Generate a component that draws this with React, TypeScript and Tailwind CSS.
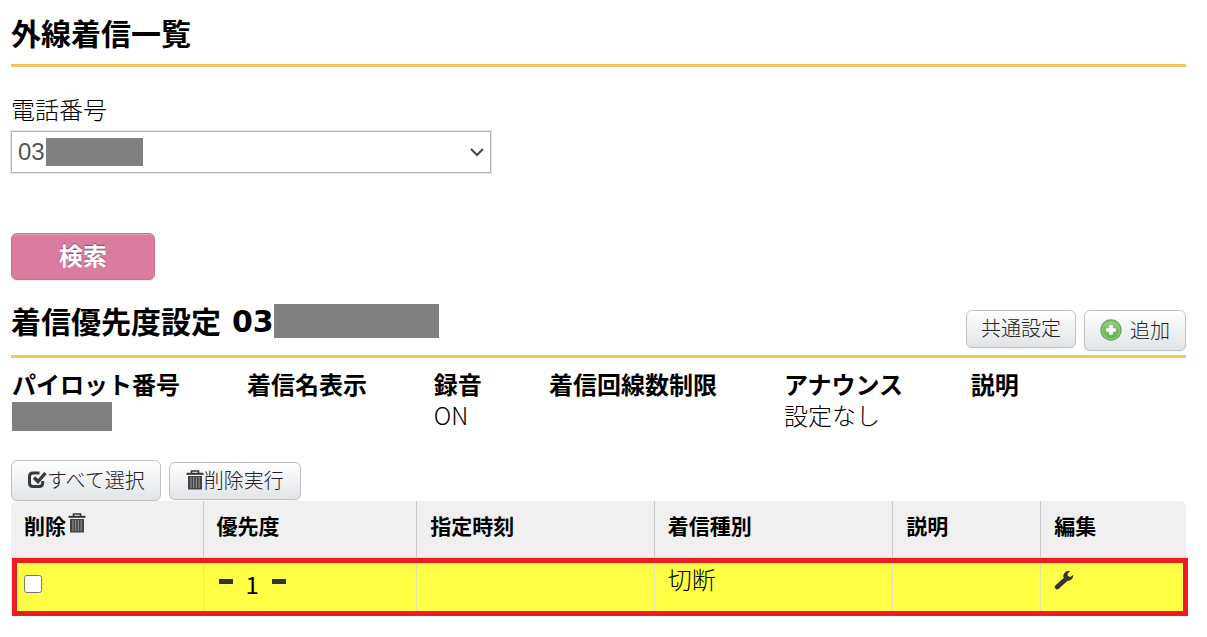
const details = [
    { label: "パイロット番号", width: "w-[20%]", masked: true },
    { label: "着信名表示", width: "w-[15.9%]" },
    { label: "録音", width: "w-[9.8%]", value: "ON" },
    { label: "着信回線数制限", width: "w-[20%]" },
    { label: "アナウンス", width: "w-[15.9%]", value: "設定なし" },
    { label: "説明", width: "w-[18.4%]" },
]

const smallButton = "flex items-center rounded-md border border-[#bfc1c4] bg-linear-to-b from-white to-[#e1e4e7] text-xl leading-7 font-light text-[#222] shadow-xs"

const TrashIcon = () => (
    <svg width="18" height="20" viewBox="0 0 18 20" fill="none" className="shrink-0" aria-hidden="true">
        <path d="M5.5 3V1h7v2" stroke="#333" strokeWidth="1.6" />
        <path d="M0.5 3.8h17" stroke="#333" strokeWidth="2" />
        <path d="M2 6h14v13.5H2z" fill="#444" />
        <path d="M5 7v11M7.7 7v11M10.4 7v11M13.1 7v11" stroke="#999" strokeWidth="1" />
    </svg>
)

const CheckIcon = () => (
    <svg width="20" height="18" viewBox="0 0 20 18" fill="none" className="shrink-0" aria-hidden="true">
        <path d="M12.5 2H6Q2.5 2 2.5 5.5V12Q2.5 15.5 6 15.5H12.2Q15.7 15.5 15.7 12V10" stroke="#3a3a3a" strokeWidth="3" />
        <path d="M7 6.5l4 4L18.5 2" stroke="#3a3a3a" strokeWidth="3.4" />
    </svg>
)

const AddIcon = () => (
    <svg width="22" height="22" viewBox="0 0 22 22" className="shrink-0" aria-hidden="true">
        <defs>
            <linearGradient id="add-green" x1="0" y1="0" x2="0" y2="1">
                <stop offset="0" stopColor="#97c982" />
                <stop offset="1" stopColor="#62b047" />
            </linearGradient>
        </defs>
        <circle cx="11" cy="11" r="10.7" fill="#6aa65c" />
        <circle cx="11" cy="11" r="9.4" fill="#8fc57c" />
        <circle cx="11" cy="11" r="8.2" fill="url(#add-green)" />
        <path d="M11 6.2v9.6M6.2 11h9.6" stroke="#fff" strokeWidth="3.6" />
    </svg>
)

const WrenchIcon = () => (
    <svg width="20" height="20" viewBox="0 0 20 20" fill="none" className="shrink-0" aria-hidden="true">
        <path d="M3.2 17L12.5 8.5" stroke="#333" strokeWidth="4.8" strokeLinecap="round" />
        <path d="M16.2 1.2A5.3 5.3 0 0 0 9.3 6.8L12.6 10.6A5.3 5.3 0 0 0 19.2 5L16.2 6.9L13.8 6.1L13.6 3.5Z" fill="#333" />
    </svg>
)

const App = () => {
    return (
        <main className="bg-white pt-[10px] pr-[21px] pb-4 pl-[11px] font-['Noto_Sans_CJK_JP',sans-serif] text-2xl font-light text-black">
            <h1 className="border-b-3 border-[#f0c661] pb-[10px] text-[30px] leading-[44px] font-bold">外線着信一覧</h1>

            <form onSubmit={(e) => e.preventDefault()}>
                <label htmlFor="phone" className="mt-[26px] block leading-8">電話番号</label>
                <div className="relative mt-[6px] w-full max-w-[480px]">
                    <select id="phone" className="block h-[42px] w-full appearance-none border border-[#b5b5b5] bg-white px-[6px] font-['Liberation_Sans',sans-serif] text-2xl font-normal text-[#555] shadow-[0_0_1px_1px_#e5e5e5]">
                        <option>03</option>
                    </select>
                    <span className="pointer-events-none absolute top-[7px] left-[35px] h-7 w-[97px] bg-[#808080]" />
                    <svg width="14" height="9" viewBox="0 0 14 9" fill="none" className="pointer-events-none absolute top-[17px] right-[7px]" aria-hidden="true">
                        <path d="M1 1l6 6 6-6" stroke="#444" strokeWidth="2" />
                    </svg>
                </div>
                <button type="submit" className="mt-[60px] block h-[47px] w-36 rounded-md border border-[#d16b92] bg-[#da7c9f] pb-1 text-2xl leading-8 font-bold text-white shadow-[inset_0_1px_0_#e59bb6,0_1px_2px_#00000015] text-shadow-[0_-1px_1px_#00000060]">検索</button>
            </form>

            <div className="mt-[18px] flex justify-between border-b-3 border-[#f0c661]">
                <h2 className="flex pb-[11px] text-[30px] leading-[44px] font-bold">
                    着信優先度設定
                    <span className="ml-[11px] pt-[2px] font-['DejaVu_Sans',sans-serif]">03</span>
                    <span className="mt-[6px] h-[34px] w-[165px] bg-[#808080]" />
                </h2>
                <div className="flex items-start gap-2 pt-3">
                    <button type="button" className={`${smallButton} h-[38px] px-[14px] pb-[3px]`}>共通設定</button>
                    <button type="button" className={`${smallButton} h-[41px] gap-2 px-[15px] pb-[2px]`}><AddIcon />追加</button>
                </div>
            </div>

            <table className="mt-[10px] w-full table-fixed text-left">
                <thead>
                    <tr>
                        {details.map((d) => (
                            <th key={d.label} className={`${d.width} py-0 pl-px leading-8 font-bold whitespace-nowrap`}>{d.label}</th>
                        ))}
                    </tr>
                </thead>
                <tbody>
                    <tr className="align-top">
                        {details.map((d) => (
                            <td key={d.label} className="h-[31px] py-0 pl-px leading-[30px]">
                                {d.masked ? <span className="mt-[2px] block h-[29px] w-[100px] bg-[#808080]" /> : d.value}
                            </td>
                        ))}
                    </tr>
                </tbody>
            </table>

            <div className="mt-[29px] flex items-start gap-2">
                <button type="button" className={`${smallButton} h-[41px] px-[15px] pb-[2px]`}><CheckIcon />すべて選択</button>
                <button type="button" className={`${smallButton} mt-[2px] h-[38px] px-4 pb-[2px]`}><TrashIcon />削除実行</button>
            </div>

            <div className="relative">
                <table className="w-full table-fixed border-separate border-spacing-0 text-left">
                    <thead className="text-[21px] leading-8">
                        <tr className="h-[57px] align-top *:border-b *:border-[#d8d8d8] *:border-l-[#c8c8c8] *:bg-[#f0f0f0] *:px-[13px] *:pt-2 *:font-bold">
                            <th className="w-[16.3%] rounded-tl-md"><span className="flex gap-[2px]">削除<span className="pt-1"><TrashIcon /></span></span></th>
                            <th className="w-[18.2%] border-l">優先度</th>
                            <th className="w-[20.2%] border-l">指定時刻</th>
                            <th className="w-[20.3%] border-l">着信種別</th>
                            <th className="w-[12.6%] border-l">説明</th>
                            <th className="w-[12.4%] rounded-tr-md border-l">編集</th>
                        </tr>
                    </thead>
                    <tbody>
                        <tr className="h-14 align-top *:border-l-[#e3e3b0] *:bg-[#ffff45] *:px-[13px] *:pt-[5px]">
                            <td><input type="checkbox" aria-label="削除" className="mt-3 block size-[18px]" /></td>
                            <td className="border-l">
                                <div className="flex gap-[13px]">
                                    <span className="mt-4 ml-[2px] h-[5px] w-[14px] bg-[#333]" />
                                    <span className="pt-[5px] leading-8 font-normal">1</span>
                                    <span className="mt-4 h-[5px] w-[14px] bg-[#333]" />
                                </div>
                            </td>
                            <td className="border-l" />
                            <td className="border-l leading-8">切断</td>
                            <td className="border-l" />
                            <td className="border-l">
                                <button type="button" aria-label="編集" className="mt-[7px] block"><WrenchIcon /></button>
                            </td>
                        </tr>
                    </tbody>
                </table>
                <div className="pointer-events-none absolute top-[57px] -right-[2px] -bottom-[2px] left-px border-5 border-[#ed1c24]" />
            </div>
        </main>
    )
}

export default App
